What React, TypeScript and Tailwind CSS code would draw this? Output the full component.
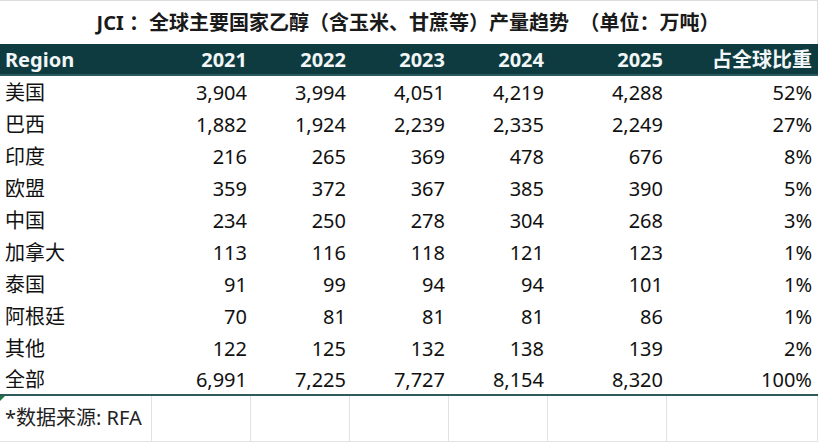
import React from "react";

const rows: [string, string, string, string, string, string, string][] = [
  ["美国", "3,904", "3,994", "4,051", "4,219", "4,288", "52%"],
  ["巴西", "1,882", "1,924", "2,239", "2,335", "2,249", "27%"],
  ["印度", "216", "265", "369", "478", "676", "8%"],
  ["欧盟", "359", "372", "367", "385", "390", "5%"],
  ["中国", "234", "250", "278", "304", "268", "3%"],
  ["加拿大", "113", "116", "118", "121", "123", "1%"],
  ["泰国", "91", "99", "94", "94", "101", "1%"],
  ["阿根廷", "70", "81", "81", "81", "86", "1%"],
  ["其他", "122", "125", "132", "138", "139", "2%"],
  ["全部", "6,991", "7,225", "7,727", "8,154", "8,320", "100%"],
];

const cols = "grid grid-cols-[152px_99px_99px_99px_99px_119px_151px]";

export default function App() {
  return (
    <div
      className="w-[818px] h-[443px] bg-white overflow-hidden text-[#111]"
      style={{ fontFamily: '"Noto Sans", "Noto Sans CJK SC", sans-serif' }}
    >
      <div className="h-[44px] flex items-center justify-center border-t border-r border-[#dcdcdc] font-bold text-[20px] pr-[1px] text-[#1a1a1a]">
        JCI ：全球主要国家乙醇（含玉米、甘蔗等）产量趋势&nbsp;&nbsp;（单位：万吨）
      </div>
      <div className={`${cols} h-[32px] bg-[#0d3b40] border-b-2 border-[#2c5b5f] text-[#f2f6f6] font-bold text-[20px] leading-[30px] pt-[1px]`}>
        <div className="pl-[5px]">Region</div>
        <div className="text-right pr-[4px]">2021</div>
        <div className="text-right pr-[4px]">2022</div>
        <div className="text-right pr-[4px]">2023</div>
        <div className="text-right pr-[4px]">2024</div>
        <div className="text-right pr-[4px]">2025</div>
        <div className="text-right pr-[6px]">占全球比重</div>
      </div>
      {rows.map((r, i) => (
        <div
          key={i}
          className={`${cols} h-[32px] text-[20px] pt-[1px] ${i === rows.length - 1 ? "border-b-2 border-[#2f5a5c] leading-[29px]" : "leading-[31px]"}`}
        >
          <div className="pl-[5px]">{r[0]}</div>
          <div className="text-right pr-[4px]">{r[1]}</div>
          <div className="text-right pr-[4px]">{r[2]}</div>
          <div className="text-right pr-[4px]">{r[3]}</div>
          <div className="text-right pr-[4px]">{r[4]}</div>
          <div className="text-right pr-[4px]">{r[5]}</div>
          <div className="text-right pr-[6px]">{r[6]}</div>
        </div>
      ))}
      <div className={`${cols} h-[46px] border-b border-[#e2e2e2] text-[20px] leading-[44px]`}>
        <div className="relative pl-[5px] border-r border-[#e2e2e2] text-[#222]">
          <span className="absolute left-0 top-0 w-0 h-0 border-t-[5px] border-r-[5px] border-t-[#1e7a3c] border-r-transparent" />
          *数据来源: RFA
        </div>
        <div className="border-r border-[#e2e2e2]" />
        <div className="border-r border-[#e2e2e2]" />
        <div className="border-r border-[#e2e2e2]" />
        <div className="border-r border-[#e2e2e2]" />
        <div className="border-r border-[#e2e2e2]" />
        <div className="border-r border-[#e2e2e2]" />
      </div>
    </div>
  );
}
